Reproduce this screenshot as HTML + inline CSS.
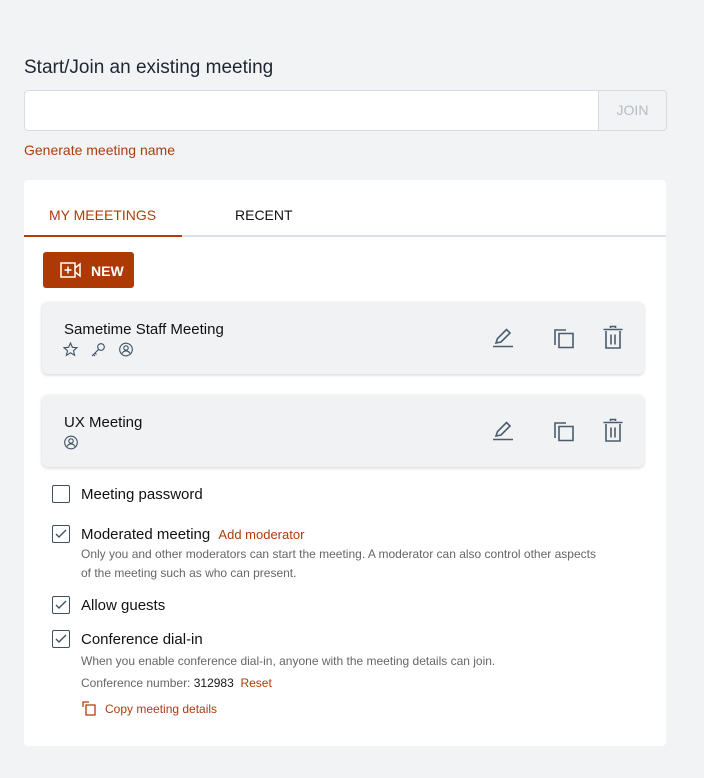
<!DOCTYPE html>
<html><head><style>
*{box-sizing:border-box;margin:0;padding:0}
body{width:704px;height:778px;background:#f2f3f5;font-family:"Liberation Sans",sans-serif;position:relative;overflow:hidden;color:#161616}
.abs{position:absolute}
.title{left:24px;top:57px;font-size:19px;color:#1d2733}
.input{left:24px;top:90px;width:643px;height:41px;background:#fff;border:1px solid #d8dce0;border-radius:4px}
.join{left:598px;top:90px;width:69px;height:41px;background:#f2f3f5;border:1px solid #d8dce0;border-radius:0 4px 4px 0;color:#b5bcc3;font-size:14px;text-align:center;line-height:39px}
.gen{left:24px;top:142px;font-size:14px;color:#b03c0a}
.card{left:24px;top:180px;width:642px;height:566px;background:#fff;border-radius:4px}
.tab{top:207px;font-size:14px}
.uline{left:24px;top:235px;width:642px;height:2px;background:#dcdfe3}
.uline2{left:24px;top:235px;width:158px;height:2px;background:#b03c0a}
.new{left:43px;top:252px;width:91px;height:36px;background:#ad3a05;border-radius:3px;color:#fff;font-size:14px;font-weight:bold}
.mc{left:42px;width:602px;height:72px;background:#f1f2f4;border-radius:6px;box-shadow:0 1px 3px rgba(0,0,0,.18)}
.mt{left:22px;top:19px;font-size:15px;color:#111}
.cb{left:52px;width:18px;height:18px;border:1.5px solid #3e5163;border-radius:2px}
.lab{left:81px;font-size:15px;color:#111}
.sm{left:81px;font-size:12px;color:#666;line-height:19px}
.or{color:#b03c0a}
</style></head><body>
<div class="abs title">Start/Join an existing meeting</div>
<div class="abs input"></div>
<div class="abs join">JOIN</div>
<div class="abs gen">Generate meeting name</div>
<div class="abs card"></div>
<div class="abs tab" style="left:49px;color:#b03c0a">MY MEEETINGS</div>
<div class="abs tab" style="left:235px;color:#111">RECENT</div>
<div class="abs uline"></div><div class="abs uline2"></div>
<div class="abs new">
<svg class="abs" style="left:17px;top:10px" width="22" height="16" viewBox="0 0 22 16" fill="none" stroke="#fff" stroke-width="1.5"><rect x="1" y="1" width="14" height="14"/><path d="M8 4.5v7M4.5 8h7M15 6l5-4v12l-5-4"/></svg>
<span class="abs" style="left:48px;top:11px">NEW</span></div>

<div class="abs mc" style="top:302px">
<div class="abs mt">Sametime Staff Meeting</div>
<svg class="abs" style="left:21px;top:40px" width="80" height="15" viewBox="0 0 80 15" fill="none" stroke="#3e5163" stroke-width="1.1"><path d="M7.5 1l1.9 4.3 4.6.4-3.5 3 1.1 4.6-4.1-2.5-4.1 2.5 1.1-4.6-3.5-3 4.6-.4z"/><circle cx="38" cy="5" r="3.3"/><path d="M35.6 7.4L29 14M30.5 12.5l1.5 1.5M32 11l1.5 1.5"/><circle cx="63" cy="7.5" r="6.3"/><circle cx="63" cy="6" r="2.2"/><path d="M59 11.5c1-2 2.3-2.6 4-2.6s3 .6 4 2.6"/></svg>
</div>
<div class="abs mc" style="top:395px">
<div class="abs mt">UX Meeting</div>
<svg class="abs" style="left:21px;top:40px" width="16" height="15" viewBox="55 0 16 15" fill="none" stroke="#3e5163" stroke-width="1.1"><circle cx="63" cy="7.5" r="6.3"/><circle cx="63" cy="6" r="2.2"/><path d="M59 11.5c1-2 2.3-2.6 4-2.6s3 .6 4 2.6"/></svg>
</div>
<svg class="abs" style="left:0;top:0" width="704" height="500" viewBox="0 0 704 500" fill="none" stroke="#4a5c6d" stroke-width="1.6">
<g>
<path d="M493 346.5h20M496 343l1.5-4.5 9-9 3.5 3.5-9 9z"/>
<path d="M555 345v-15h11M559 333.5h14v14h-14z"/>
<path d="M603.5 329.5h19M606 331v17h14V331M610.5 328v-1.5h5V328M611 334.5v10M615 334.5v10"/>
</g>
<g transform="translate(0,93)">
<path d="M493 346.5h20M496 343l1.5-4.5 9-9 3.5 3.5-9 9z"/>
<path d="M555 345v-15h11M559 333.5h14v14h-14z"/>
<path d="M603.5 329.5h19M606 331v17h14V331M610.5 328v-1.5h5V328M611 334.5v10M615 334.5v10"/>
</g>
</svg>

<div class="abs cb" style="top:485px"></div>
<div class="abs lab" style="top:486px">Meeting password</div>
<div class="abs cb" style="top:525px"></div>
<svg class="abs" style="left:55px;top:529px" width="12" height="10"><path d="M1 5l3 3 7-7" stroke="#3e5163" stroke-width="1.4" fill="none"/></svg>
<div class="abs lab" style="top:526px">Moderated meeting <span class="or" style="font-size:13px;margin-left:4px">Add moderator</span></div>
<div class="abs sm" style="top:545px">Only you and other moderators can start the meeting. A moderator can also control other aspects<br>of the meeting such as who can present.</div>
<div class="abs cb" style="top:596px"></div>
<svg class="abs" style="left:55px;top:600px" width="12" height="10"><path d="M1 5l3 3 7-7" stroke="#3e5163" stroke-width="1.4" fill="none"/></svg>
<div class="abs lab" style="top:597px">Allow guests</div>
<div class="abs cb" style="top:630px"></div>
<svg class="abs" style="left:55px;top:634px" width="12" height="10"><path d="M1 5l3 3 7-7" stroke="#3e5163" stroke-width="1.4" fill="none"/></svg>
<div class="abs lab" style="top:631px">Conference dial-in</div>
<div class="abs sm" style="top:652px">When you enable conference dial-in, anyone with the meeting details can join.</div>
<div class="abs sm" style="top:674px">Conference number: <span style="color:#161616">312983</span> &nbsp;<span class="or">Reset</span></div>
<svg class="abs" style="left:82px;top:701px" width="16" height="16" fill="none" stroke="#b03c0a" stroke-width="1.3"><path d="M1 6V1h6M4 4h9v10H4z"/></svg>
<div class="abs sm or" style="left:105px;top:700px;color:#b03c0a">Copy meeting details</div>
</body></html>
